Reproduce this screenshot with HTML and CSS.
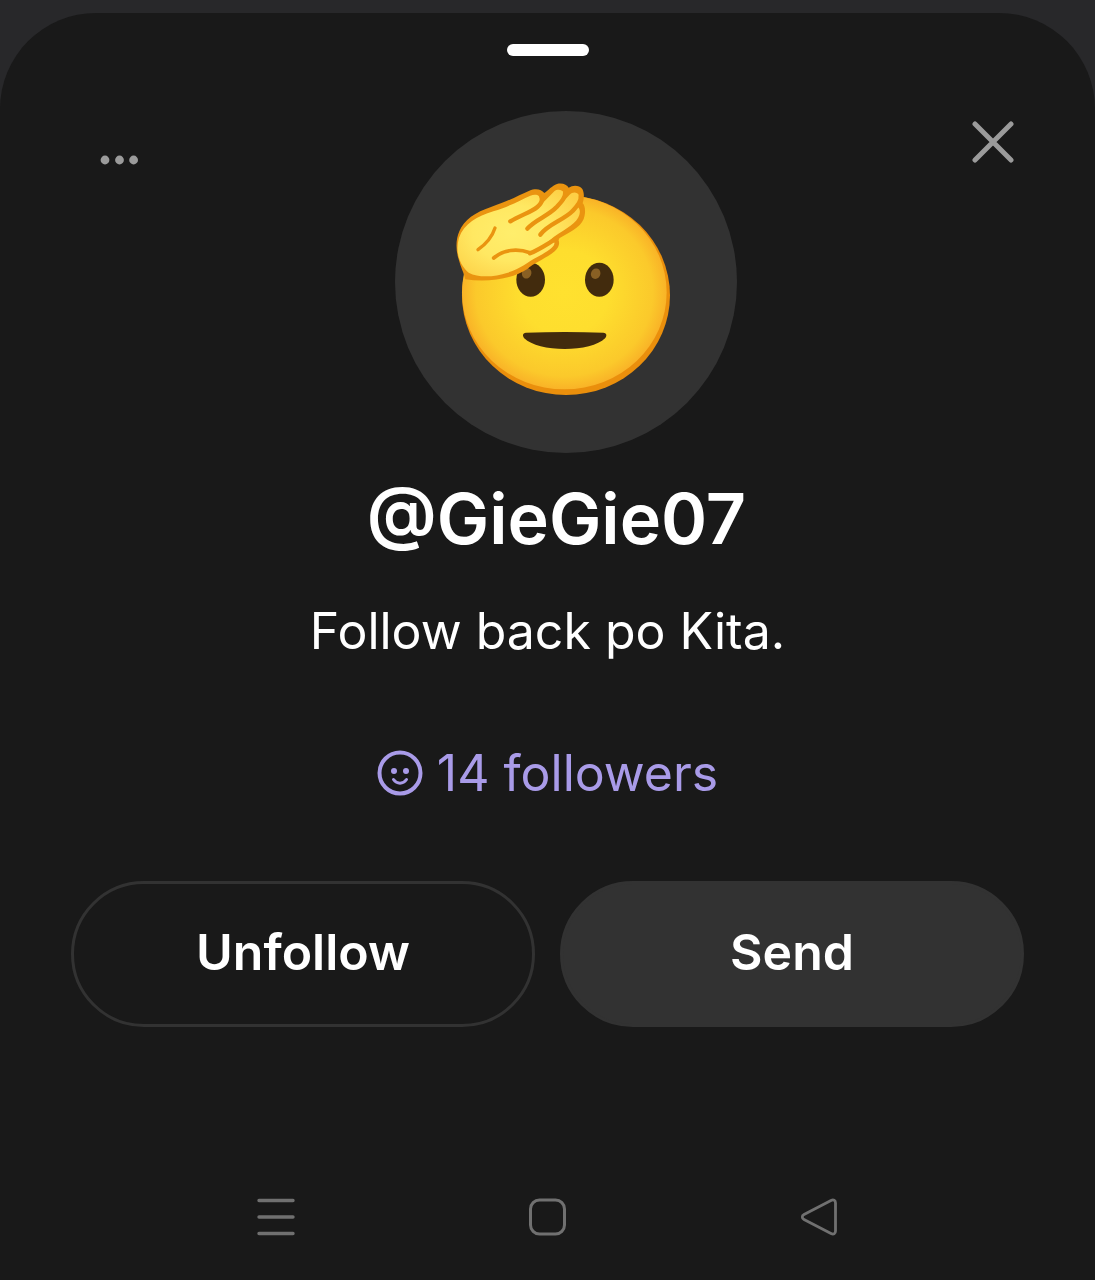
FILE: index.html
```html
<!DOCTYPE html>
<html lang="en">
<head>
  <meta charset="UTF-8">
  <meta name="viewport" content="width=device-width, initial-scale=1">
  <title>@GieGie07</title>
  <link rel="stylesheet" href="styles.css">
</head>
<body>
  <main class="sheet">
    <div class="handle"></div>

    <!-- Menu, avatar, close -->
    <header class="top">
      <button class="icon-button menu" aria-label="More options">
        <svg width="38" height="10" viewBox="0 0 38 10" fill="#9b9b9b">
          <circle cx="5" cy="5" r="4.4"/>
          <circle cx="19.5" cy="5" r="4.4"/>
          <circle cx="33.6" cy="5" r="4.4"/>
        </svg>
      </button>
      <div class="avatar">
        <svg width="250" height="240" viewBox="3 0 750 720" role="img" aria-label="Saluting face">
          <defs>
            <radialGradient id="face" cx="50%" cy="50%" r="54%">
              <stop offset="0" stop-color="#ffe12f"/>
              <stop offset="0.4" stop-color="#fede2e"/>
              <stop offset="0.8" stop-color="#fbc92b"/>
              <stop offset="1" stop-color="#f8a625"/>
            </radialGradient>
            <radialGradient id="hand" cx="45%" cy="50%" r="65%">
              <stop offset="0" stop-color="#ffee6c"/>
              <stop offset="0.5" stop-color="#ffe862"/>
              <stop offset="1" stop-color="#fdcf45"/>
            </radialGradient>
          </defs>
          <ellipse cx="378" cy="376" rx="312" ry="299" fill="#ea8f0c"/>
          <ellipse cx="373" cy="367" rx="307" ry="291" fill="url(#face)"/>
          <g fill="#422b0d">
            <ellipse cx="272" cy="329" rx="43" ry="51"/>
            <ellipse cx="478" cy="329" rx="43" ry="51"/>
            <path d="M258 488C335 485 415 485 490 488C501 489 501 497 495 505C475 526 425 537 374 537C323 537 273 526 253 505C247 497 247 489 258 488Z"/>
          </g>
          <g fill="#896024">
            <ellipse cx="260" cy="310" rx="14" ry="16" transform="rotate(25 260 310)"/>
            <ellipse cx="467" cy="311" rx="14" ry="16" transform="rotate(25 467 311)"/>
          </g>
          <path fill="#ea9410" d="M76 328C72 310 63 294 56 268C46 237 48 206 58 184C72 149 105 127 155 110C205 94 237 75 268 62C288 54 304 58 313 69C325 61 336 47 351 42C367 38 381 44 386 53C399 44 418 45 427 57C433 68 433 83 428 100C437 108 437 130 431 147C421 173 385 189 354 207C361 219 357 232 344 244C320 264 283 278 262 297C218 327 145 338 76 328Z"/>
          <path fill="url(#hand)" d="M86 308C54 280 46 240 57 203C72 162 112 138 160 124C205 111 241 90 271 77C289 70 301 77 302 89C303 97 295 106 285 113L309 98L343 64C354 55 368 60 373 70C377 79 371 90 364 101L389 74C398 64 412 66 417 75C422 84 416 94 408 108C418 112 422 120 418 135C411 158 382 174 342 200L323 216C336 210 345 212 343 222C340 234 318 247 292 261C265 275 240 297 203 308C165 320 118 325 86 308Z"/>
          <g fill="none" stroke="#ea9410" stroke-width="13" stroke-linecap="round" stroke-linejoin="round">
            <path d="M211 154C240 136 273 127 292 111C304 101 308 90 304 80"/>
            <path d="M262 176C284 150 326 137 349 112C364 96 377 83 376 64"/>
            <path d="M301 194C325 162 370 151 397 124C412 107 425 93 422 76"/>
            <path d="M351 205C327 218 303 236 270 250"/>
            <path d="M161 264C190 239 231 234 270 248" stroke-width="11"/>
            <path d="M114 239C138 222 156 202 165 174" stroke-width="10"/>
          </g>
        </svg>
      </div>
      <button class="icon-button close" aria-label="Close">
        <svg width="42" height="42" viewBox="0 0 42 42" fill="none" stroke="#9b9b9b" stroke-width="5" stroke-linecap="round">
          <path d="M3 3L39 39M39 3L3 39"/>
        </svg>
      </button>
    </header>

    <h1 class="username">@GieGie07</h1>
    <p class="bio">Follow back po Kita.</p>

    <a class="followers" href="#">
      <svg width="46" height="46" viewBox="0 0 46 46" fill="none" stroke="#a99be8" stroke-width="4" stroke-linecap="round">
        <circle cx="23" cy="23" r="20.5"/>
        <path d="M16.5 29.5C20 34.5 26 34.5 29.5 29.5" stroke-width="3"/>
        <g fill="#a99be8" stroke="none">
          <circle cx="17" cy="21" r="3"/>
          <circle cx="29" cy="21" r="3"/>
        </g>
      </svg>
      <span>14 followers</span>
    </a>

    <div class="actions">
      <button class="action outline">Unfollow</button>
      <button class="action filled">Send</button>
    </div>

    <!-- System navigation -->
    <nav class="system-nav" aria-label="System">
      <button class="icon-button" aria-label="Recent apps">
        <svg width="38" height="38" viewBox="0 0 38 38" fill="none" stroke="#707070" stroke-width="3.4" stroke-linecap="round">
          <path d="M2 2.5H36M2 19H36M2 35.5H36"/>
        </svg>
      </button>
      <button class="icon-button" aria-label="Home">
        <svg width="38" height="38" viewBox="0 0 38 38" fill="none" stroke="#707070" stroke-width="3">
          <rect x="2.5" y="2" width="34" height="34" rx="9"/>
        </svg>
      </button>
      <button class="icon-button" aria-label="Back">
        <svg width="38" height="38" viewBox="0 0 38 38" fill="none" stroke="#707070" stroke-width="2.8" stroke-linejoin="round">
          <path d="M4 16.5L31 2.5C33.5 1.200 35.5 2.300 35.5 5V33C35.5 35.700 33.5 36.800 31 35.500L4 21.500C1.700 20.300 1.700 17.700 4 16.500Z"/>
        </svg>
      </button>
    </nav>
  </main>
</body>
</html>
```

FILE: styles.css
```css
* {
  box-sizing: border-box;
}
body {
  margin: 0;
  padding-top: 13px;
  min-height: 100vh;
  display: flex;
  background-color: #28282a;
  color: #fff;
  font-family: Inter, "Liberation Sans", sans-serif;
}
.sheet {
  flex: 1;
  display: flex;
  flex-direction: column;
  align-items: center;
  padding-top: 31px;
  background-color: #191919;
  border-radius: 96px 96px 0 0;
}
.handle {
  width: 82px;
  height: 12px;
  border-radius: 6px;
  background-color: #fff;
}

/* Top row */
.top {
  width: 100%;
  display: grid;
  grid-template-columns: 1fr auto 1fr;
  align-items: start;
  margin-top: 55px;
  padding: 0 64px 0 100px;
}
.icon-button {
  display: flex;
  padding: 0;
  border: none;
  background: none;
  cursor: pointer;
}
.menu {
  justify-self: start;
  padding: 44px 0;
}
.close {
  justify-self: end;
  padding: 10px 17px;
}
.avatar {
  width: 342px;
  height: 342px;
  padding-top: 16px;
  display: flex;
  align-items: center;
  justify-content: center;
  border-radius: 50%;
  background-color: #323232;
}

/* Profile text */
.username {
  margin: 24px 0 0;
  padding-left: 18px;
  font-size: 70px;
  line-height: 84px;
  font-weight: 600;
}
.bio {
  margin: 38px 0 0;
  font-size: 50px;
  line-height: 64px;
}
.followers {
  display: flex;
  align-items: center;
  gap: 14px;
  margin-top: 78px;
  color: #a99be8;
  font-size: 50px;
  line-height: 64px;
  text-decoration: none;
}

/* Buttons */
.actions {
  width: 100%;
  display: flex;
  gap: 25px;
  margin-top: 76px;
  padding: 0 71px;
}
.action {
  flex: 1;
  height: 146px;
  padding: 0 0 4px;
  border: 3px solid #323232;
  border-radius: 73px;
  color: #fff;
  font-family: inherit;
  font-size: 50px;
  font-weight: 600;
  cursor: pointer;
}
.outline {
  background-color: transparent;
}
.filled {
  background-color: #323232;
}

.system-nav {
  width: 100%;
  display: grid;
  grid-template-columns: repeat(3, 1fr);
  justify-items: center;
  margin-top: auto;
  padding: 0 140px 44px;
}
```
